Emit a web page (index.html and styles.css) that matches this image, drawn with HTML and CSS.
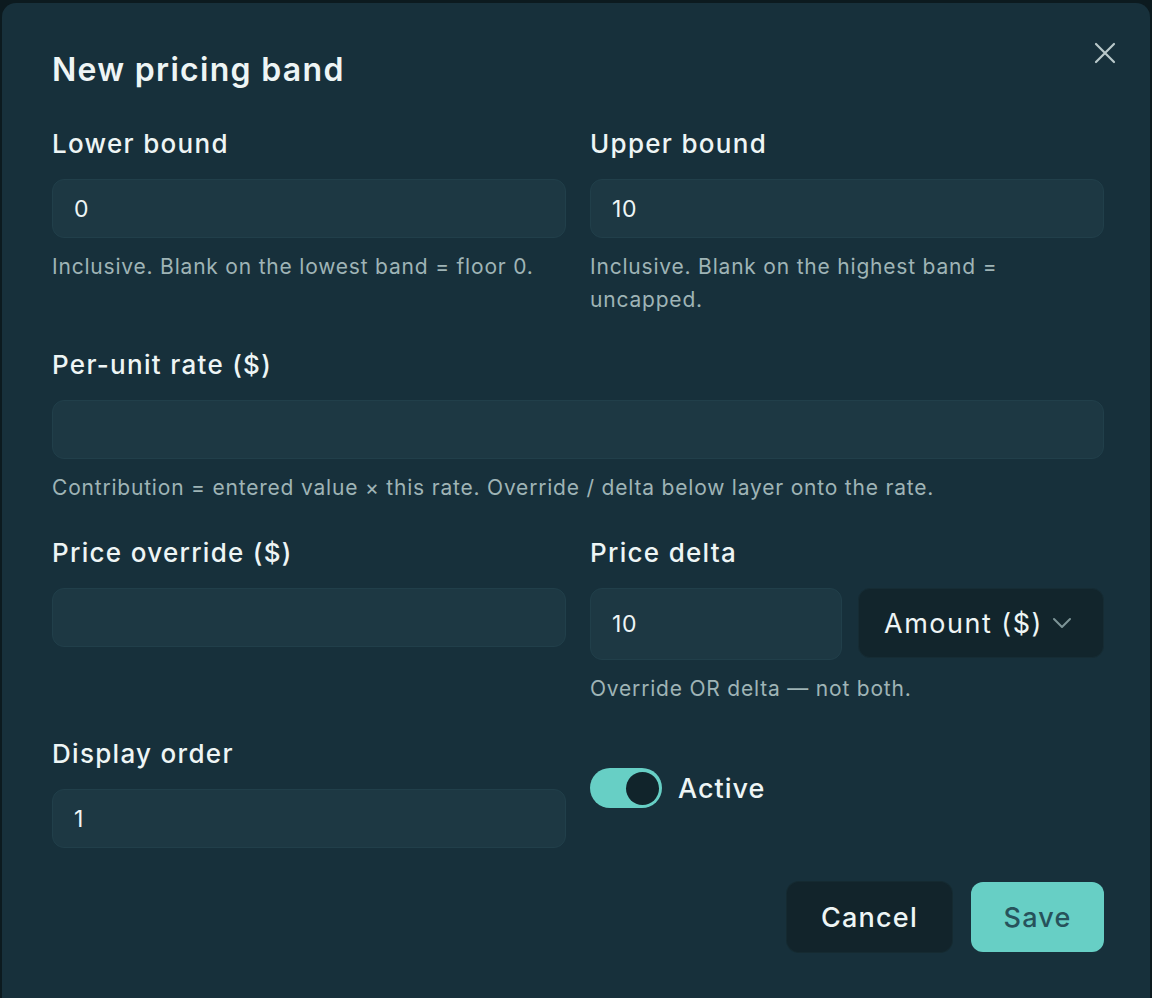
FILE: index.html
```html
<!DOCTYPE html>
<html lang="en">
<head>
  <meta charset="UTF-8" />
  <meta name="viewport" content="width=device-width, initial-scale=1.0"/>
  <title>New pricing band</title>
  <link rel="stylesheet" href="styles.css">
</head>
<body>

  <div class="dialog">
    <button class="close" aria-label="Close">
      <svg width="22" height="22" viewBox="0 0 22 22" fill="none" stroke="currentColor" stroke-width="2.2" stroke-linecap="round">
        <path d="M2 2 L20 20 M20 2 L2 20"/>
      </svg>
    </button>

    <h2 class="title">New pricing band</h2>

    <div class="row">
      <div class="field">
        <label>Lower bound</label>
        <input class="input" type="text" value="0">
        <p class="hint">Inclusive. Blank on the lowest band = floor 0.</p>
      </div>
      <div class="field">
        <label>Upper bound</label>
        <input class="input" type="text" value="10">
        <p class="hint">Inclusive. Blank on the highest band = uncapped.</p>
      </div>
    </div>

    <div class="row single">
      <div class="field">
        <label>Per-unit rate ($)</label>
        <input class="input" type="text" value="">
        <p class="hint">Contribution = entered value × this rate. Override / delta below layer onto the rate.</p>
      </div>
    </div>

    <div class="row">
      <div class="field">
        <label>Price override ($)</label>
        <input class="input" type="text" value="">
      </div>
      <div class="field">
        <label>Price delta</label>
        <div class="delta">
          <input class="input tall" type="text" value="10">
          <div class="select">
            <span>Amount ($)</span>
            <svg width="22" height="22" viewBox="0 0 22 22" fill="none" stroke="currentColor" stroke-width="2" stroke-linecap="round" stroke-linejoin="round">
              <path d="M3 7 L11 15 L19 7"/>
            </svg>
          </div>
        </div>
        <p class="hint">Override OR delta — not both.</p>
      </div>
    </div>

    <div class="row">
      <div class="field">
        <label>Display order</label>
        <input class="input" type="text" value="1">
      </div>
      <div class="switch-wrap">
        <span class="switch"><span class="knob"></span></span>
        <span class="switch-label">Active</span>
      </div>
    </div>

    <div class="actions">
      <button class="btn cancel">Cancel</button>
      <button class="btn save">Save</button>
    </div>
  </div>

</body>
</html>
```

FILE: styles.css
```css
body {
  margin: 0;
  padding: 0;
  font-family: Inter, "Open Sans", sans-serif;
  background: #0c1a1f;
  height: 998px;
  overflow: hidden;
}

.dialog {
  position: relative;
  margin: 3px 2px 0;
  height: 1010px;
  box-sizing: border-box;
  background: #17303b;
  border-radius: 14px;
  padding: 47px 46px 0 50px;
  color: #eef5f5;
}

.close {
  position: absolute;
  top: 39px;
  right: 34px;
  background: none;
  border: none;
  padding: 0;
  color: #b9c8ca;
  cursor: pointer;
}

.title {
  margin: 0 0 37px;
  font-size: 32px;
  line-height: 40px;
  font-weight: 600;
  letter-spacing: 1.3px;
}

.row {
  display: grid;
  grid-template-columns: 514px 514px;
  column-gap: 24px;
  margin-bottom: 32px;
}

.row.single {
  grid-template-columns: 1fr;
}

.field {
  display: flex;
  flex-direction: column;
}

label {
  font-size: 26px;
  line-height: 34px;
  font-weight: 500;
  letter-spacing: 1.3px;
  margin-bottom: 18px;
}

.input {
  height: 59px;
  box-sizing: border-box;
  background: #1d3843;
  border: 1px solid #213f4a;
  border-radius: 12px;
  padding: 0 21px;
  font-family: inherit;
  font-size: 23px;
  letter-spacing: 0.6px;
  color: #eef5f5;
  outline: none;
  width: 100%;
}

.input.tall {
  height: 72px;
  width: 252px;
}

.hint {
  margin: 12px 0 0;
  font-size: 21px;
  line-height: 33px;
  letter-spacing: 0.8px;
  color: #9fb4b6;
}

.delta {
  display: flex;
  gap: 16px;
  align-items: flex-start;
}

.select {
  flex: 1;
  height: 70px;
  box-sizing: border-box;
  background: #12252c;
  border: 1px solid #162c34;
  border-radius: 12px;
  display: flex;
  align-items: center;
  padding: 0 24px 0 25px;
  gap: 8px;
  font-size: 27px;
  letter-spacing: 1.5px;
  color: #eef5f5;
}

.select svg {
  color: #7d9497;
}

.switch-wrap {
  display: flex;
  align-items: center;
  gap: 16px;
  align-self: start;
  margin-top: 31px;
}

.switch {
  width: 72px;
  height: 40px;
  border-radius: 20px;
  background: #67cfc5;
  display: flex;
  align-items: center;
  justify-content: flex-end;
  padding: 0 3px;
  box-sizing: border-box;
}

.knob {
  width: 33px;
  height: 33px;
  border-radius: 50%;
  background: #11242b;
}

.switch-label {
  font-size: 27px;
  font-weight: 500;
  letter-spacing: 1px;
}

.actions {
  display: flex;
  justify-content: flex-end;
  gap: 19px;
  padding-top: 2px;
}

.btn {
  height: 70px;
  border: none;
  border-radius: 12px;
  font-family: inherit;
  font-size: 27px;
  font-weight: 500;
  letter-spacing: 1.2px;
  cursor: pointer;
}

.cancel {
  width: 165px;
  background: #12242b;
  color: #eef5f5;
  box-shadow: 0 0 0 1px #152a31;
}

.save {
  width: 133px;
  background: #67cfc5;
  color: #27525b;
}
```
